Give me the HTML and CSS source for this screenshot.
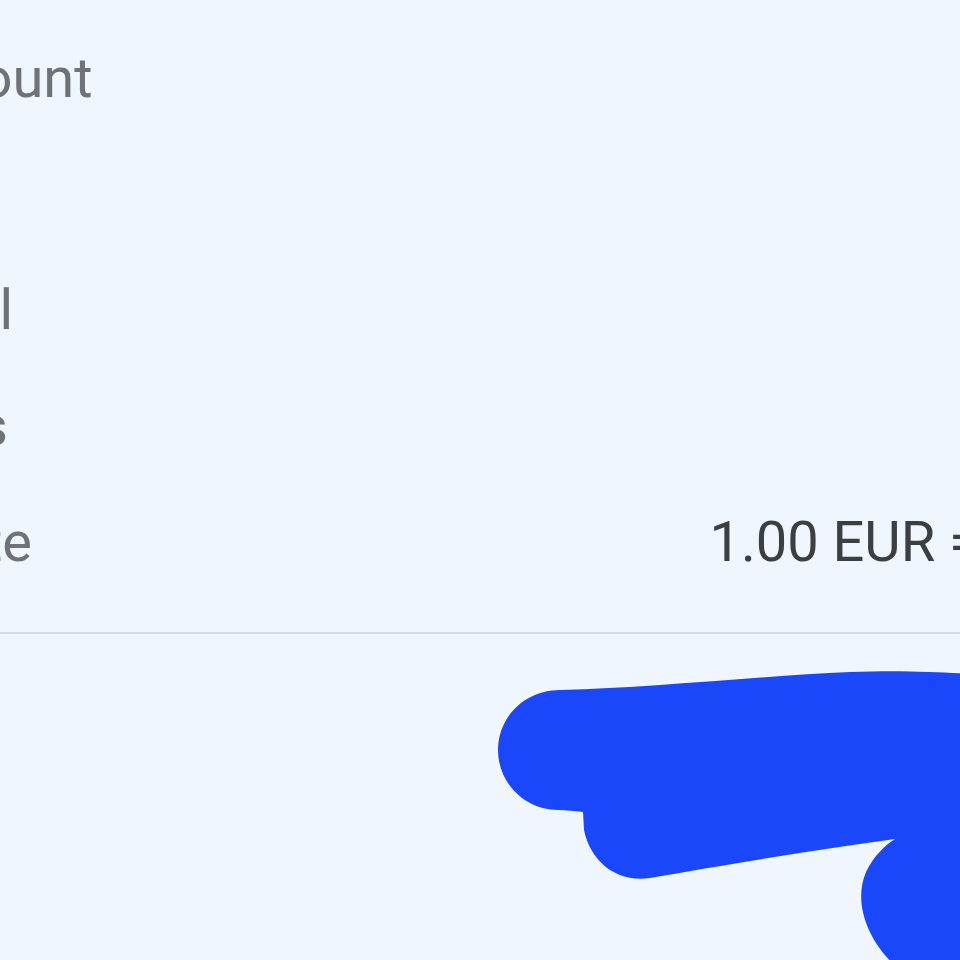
FILE: index.html
```html
<!DOCTYPE html>
<html lang="en">
<head>
  <meta charset="UTF-8" />
  <meta name="viewport" content="width=device-width, initial-scale=1.0"/>
  <title>Transfer summary</title>
  <link rel="stylesheet" href="styles.css">
</head>
<body>
  <div class="summary">
    <div class="row">
      <span class="label">Transfer amount</span>
      <span class="value">10.00 EUR</span>
    </div>
    <div class="row">
      <span class="label">Recipient</span>
      <span class="value">10.82 USD</span>
    </div>
    <div class="row">
      <span class="label">Transfer total</span>
      <span class="value">10.00 EUR</span>
    </div>
    <div class="row">
      <span class="label">Transfer fees</span>
      <span class="value">0.00 EUR</span>
    </div>
    <div class="row">
      <span class="label">Exchange rate</span>
      <span class="value">1.00 EUR = 1.0823 USD</span>
    </div>
  </div>

  <div class="actions">
    <button class="confirm">Send</button>
  </div>

  <!-- redaction scribble drawn over the button -->
  <svg class="scribble" width="960" height="960" viewBox="0 0 960 960">
    <path d="M560 690
             C650 688 760 676 850 672
             C900 670 940 672 970 674
             L970 970 L900 970
             C870 945 852 905 866 872
             C874 856 884 846 895 839
             C800 852 720 866 650 878
             C615 883 590 860 584 830
             L583 812
             C575 811 566 810 558 810
             C525 810 498 783 498 750
             C498 717 525 690 560 690 Z"
          fill="#1b47fa"/>
  </svg>
</body>
</html>
```

FILE: styles.css
```css
body {
  font-family: Roboto, 'Noto Sans', sans-serif;
  background-color: #f0f6fd;
  margin: 0;
  padding-top: 20px;
  height: 960px;
  overflow: hidden;
  box-sizing: border-box;
  position: relative;
}

.summary {
  margin-left: -320px;
  width: 1606px;
  padding-bottom: 32px;
  border-bottom: 2px solid #d7dce2;
}

.row {
  display: flex;
  justify-content: space-between;
  align-items: baseline;
  height: 116px;
  line-height: 116px;
  font-size: 56px;
  white-space: nowrap;
}

.label {
  color: #6f7378;
}

.value {
  color: #3b3e42;
}

.actions {
  display: flex;
  justify-content: flex-end;
  padding-top: 71px;
}

.confirm {
  font-family: inherit;
  font-size: 48px;
  line-height: 56px;
  background-color: #1b47fa;
  color: #ffffff;
  border: none;
  border-radius: 45px;
  padding: 17px 60px;
}

.scribble {
  position: absolute;
  top: 0;
  left: 0;
}
```
